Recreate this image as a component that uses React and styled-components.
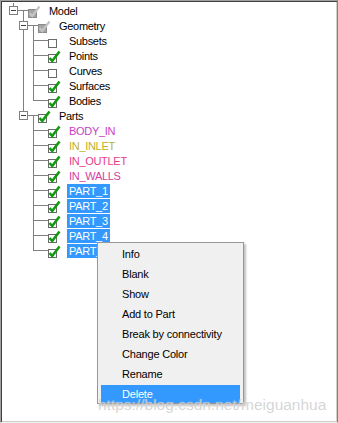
import React from 'react';
import styled, { createGlobalStyle } from 'styled-components';

const GlobalStyle = createGlobalStyle`
    body {
        margin: 0;
        background: #fff;
        font-family: "Liberation Sans", Arial, sans-serif;
    }
`;

const LINE = '#808080';

const Frame = styled.div`
    position: relative;
    width: 338px;
    height: 423px;
    box-sizing: border-box;
    background: #fff;
    border: 1px solid;
    border-color: #a0a0a0 #808080 #f0f0f0 #a0a0a0;
    box-shadow: inset 1px 1px 0 #404040, inset -1px -1px 0 #d4d0c8;
    overflow: hidden;
`;

const Tree = styled.div`
    display: flex;
    flex-direction: column;
    padding: 2px 0 0 7px;
`;

const Row = styled.div`
    display: flex;
    align-items: flex-start;
    height: 15px;
`;

const Cell = styled.span`
    position: relative;
    flex: none;
    width: 10px;
    height: 15px;

    &::before {
        content: '';
        position: absolute;
        left: 5px;
        top: 0;
        width: 1px;
        height: ${p => (p.$v === 'full' ? '15px' : '8px')};
        background: ${LINE};
        display: ${p => (p.$v === 'none' ? 'none' : 'block')};
    }

    &::after {
        content: '';
        position: absolute;
        top: 7px;
        left: 5px;
        width: ${p => (p.$h ? '5px' : '0')};
        height: 1px;
        background: ${LINE};
    }
`;

const Stub = styled.span`
    position: relative;
    flex: none;
    width: 10px;
    height: 15px;

    &::before {
        content: '';
        position: absolute;
        left: 0;
        top: 7px;
        width: 10px;
        height: 1px;
        background: ${LINE};
    }

    &::after {
        content: '';
        position: absolute;
        left: 5px;
        top: 7px;
        bottom: 0;
        width: 1px;
        background: ${LINE};
        display: ${p => (p.$down ? 'block' : 'none')};
    }
`;

const Expander = styled.span`
    position: absolute;
    left: 1px;
    top: 3px;
    z-index: 1;
    width: 9px;
    height: 9px;
    box-sizing: border-box;
    border: 1px solid ${LINE};
    background: #fff;

    &::after {
        content: '';
        position: absolute;
        left: 1px;
        top: 3px;
        width: 5px;
        height: 1px;
        background: #404040;
    }
`;

const CheckCell = styled.span`
    flex: none;
    width: 19px;
    height: 15px;
    display: flex;
    align-items: flex-start;

    svg {
        margin-top: 2px;
        overflow: visible;
    }
`;

const Label = styled.span`
    margin-top: 1px;
    padding: 0 2px;
    font-size: 11px;
    line-height: 14px;
    letter-spacing: -0.3px;
    white-space: nowrap;
    color: ${p => (p.$selected ? '#fff' : p.$color || '#000')};
    background: ${p => (p.$selected ? '#3399ff' : 'transparent')};
`;

const Menu = styled.div`
    position: absolute;
    left: 96px;
    top: 241px;
    width: 147px;
    box-sizing: border-box;
    display: flex;
    flex-direction: column;
    gap: 2px;
    padding: 2px 3px 0;
    background: #f0f0f0;
    border: 1px solid #979797;
    box-shadow: 2px 2px 2px rgba(0, 0, 0, 0.25);
`;

const MenuItem = styled.div`
    height: 18px;
    padding-left: 21px;
    font-size: 11px;
    line-height: 18px;
    letter-spacing: -0.2px;
    color: ${p => (p.$active ? '#fff' : '#000')};
    background: ${p => (p.$active ? '#3399ff' : 'transparent')};
`;

const Watermark = styled.div`
    position: absolute;
    left: 97px;
    top: 396px;
    font-size: 15.5px;
    line-height: 16px;
    white-space: nowrap;
    color: rgba(185, 185, 185, 0.6);
    text-shadow: 0 0 1px rgba(255, 255, 255, 0.7);
    pointer-events: none;
`;

const CheckBox = ({ state }) => {
    const partial = state === 'partial';
    const checked = state === 'checked';
    return (
        <svg width="14" height="13" viewBox="0 0 14 13">
            <rect
                x="0.5"
                y="4.5"
                width="8"
                height="8"
                fill={partial ? '#a4a4a4' : '#fff'}
                stroke={partial ? '#8a8a8a' : '#6a6a6a'}
            />
            {checked && (
                <path d="M1.5 8 L4.2 11 L11.5 1.5" fill="none" stroke="#119911" strokeWidth="2.6" />
            )}
            {partial && (
                <path d="M1.5 8 L4.2 11 L11.5 1.5" fill="none" stroke="#c4c4c4" strokeWidth="2.2" />
            )}
        </svg>
    );
};

const rows = [
    { label: 'Model', cells: [], own: 'up', exp: true, check: 'partial' },
    { label: 'Geometry', cells: ['none'], own: 'full', exp: true, check: 'partial' },
    { label: 'Subsets', cells: ['none', 'full'], own: 'full', check: 'off' },
    { label: 'Points', cells: ['none', 'full'], own: 'full', check: 'checked' },
    { label: 'Curves', cells: ['none', 'full'], own: 'full', check: 'off' },
    { label: 'Surfaces', cells: ['none', 'full'], own: 'full', check: 'checked' },
    { label: 'Bodies', cells: ['none', 'full'], own: 'up', check: 'checked' },
    { label: 'Parts', cells: ['none'], own: 'up', exp: true, check: 'checked' },
    { label: 'BODY_IN', cells: ['none', 'none'], own: 'full', check: 'checked', color: '#c83cc8' },
    { label: 'IN_INLET', cells: ['none', 'none'], own: 'full', check: 'checked', color: '#bcb028' },
    { label: 'IN_OUTLET', cells: ['none', 'none'], own: 'full', check: 'checked', color: '#e43c8c' },
    { label: 'IN_WALLS', cells: ['none', 'none'], own: 'full', check: 'checked', color: '#d43ca0' },
    { label: 'PART_1', cells: ['none', 'none'], own: 'full', check: 'checked', selected: true },
    { label: 'PART_2', cells: ['none', 'none'], own: 'full', check: 'checked', selected: true },
    { label: 'PART_3', cells: ['none', 'none'], own: 'full', check: 'checked', selected: true },
    { label: 'PART_4', cells: ['none', 'none'], own: 'full', check: 'checked', selected: true },
    { label: 'PART_5', cells: ['none', 'none'], own: 'up', check: 'checked', selected: true },
];

const menuItems = ['Info', 'Blank', 'Show', 'Add to Part', 'Break by connectivity', 'Change Color', 'Rename', 'Delete'];

const TreeRow = ({ row }) => (
    <Row>
        {row.cells.map((v, i) => (
            <Cell key={i} $v={v} />
        ))}
        <Cell $v={row.own} $h>
            {row.exp && <Expander />}
        </Cell>
        <Stub $down={row.exp} />
        <CheckCell>
            <CheckBox state={row.check} />
        </CheckCell>
        <Label $color={row.color} $selected={row.selected}>{row.label}</Label>
    </Row>
);

const App = () => (
    <Frame>
        <GlobalStyle />
        <Tree>
            {rows.map(r => (
                <TreeRow key={r.label} row={r} />
            ))}
        </Tree>
        <Menu>
            {menuItems.map(m => (
                <MenuItem key={m} $active={m === 'Delete'}>{m}</MenuItem>
            ))}
        </Menu>
        <Watermark>https://blog.csdn.net/meiguanhua</Watermark>
    </Frame>
);

export default App;
